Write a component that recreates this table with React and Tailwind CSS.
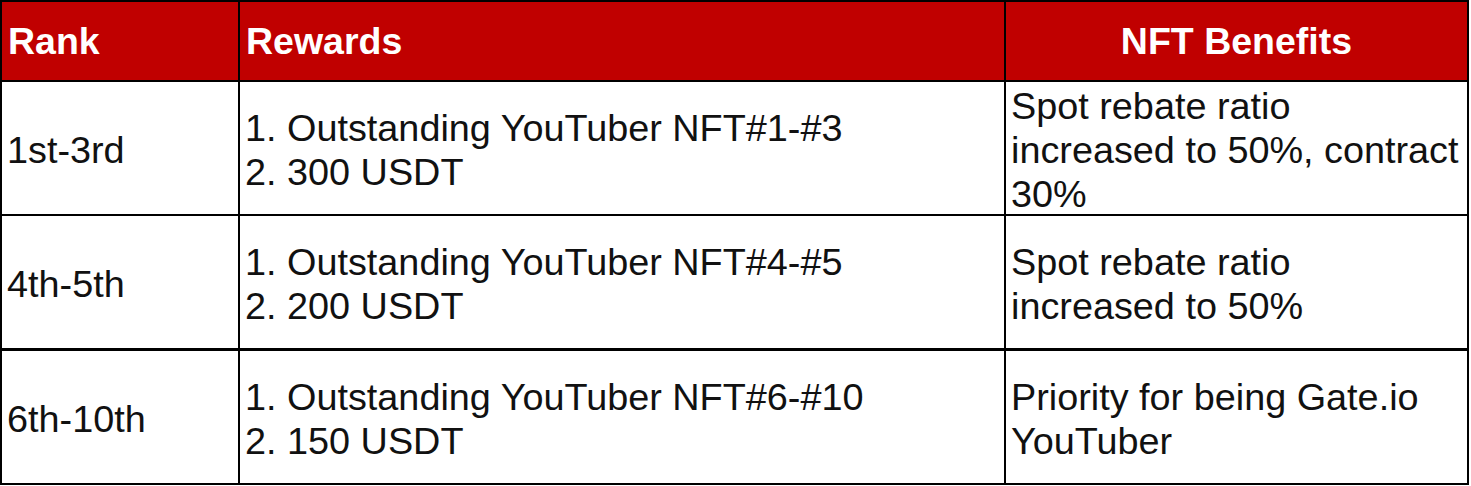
const rows = [
  {
    rank: "1st-3rd",
    rewards: ["1. Outstanding YouTuber NFT#1-#3", "2. 300 USDT"],
    benefits: ["Spot rebate ratio", "increased to 50%, contract", "30%"],
  },
  {
    rank: "4th-5th",
    rewards: ["1. Outstanding YouTuber NFT#4-#5", "2. 200 USDT"],
    benefits: ["Spot rebate ratio", "increased to 50%"],
  },
  {
    rank: "6th-10th",
    rewards: ["1. Outstanding YouTuber NFT#6-#10", "2. 150 USDT"],
    benefits: ["Priority for being Gate.io", "YouTuber"],
  },
];

function Lines({ items }) {
  return (
    <div className="flex flex-col">
      {items.map((line) => (
        <span key={line} className="whitespace-pre">
          {line}
        </span>
      ))}
    </div>
  );
}

export default function App() {
  const head = "bg-[#c00000] text-white font-bold flex items-center px-[6px] text-[37.5px]";
  const cell = "bg-white text-[#111] flex items-center pl-[5px] pt-[4px] h-[132px] text-[37.8px]";

  return (
    <div className="bg-white w-[1471px] h-[486px]">
      <div
        className="w-[1469px] border-2 border-black bg-black grid grid-cols-[236px_764px_461px] grid-rows-[78px_132px_133px_132px] gap-[2px] leading-[44px]"
        style={{ fontFamily: '"Liberation Sans", Arial, sans-serif' }}
      >
        <div className={head}>Rank</div>
        <div className={head}>Rewards</div>
        <div className={head + " justify-center"}>NFT Benefits</div>

        {rows.map((row) => (
          <div key={row.rank} className="contents">
            <div className={cell}>{row.rank}</div>
            <div className={cell}>
              <Lines items={row.rewards} />
            </div>
            <div className={cell}>
              <Lines items={row.benefits} />
            </div>
          </div>
        ))}
      </div>
    </div>
  );
}
